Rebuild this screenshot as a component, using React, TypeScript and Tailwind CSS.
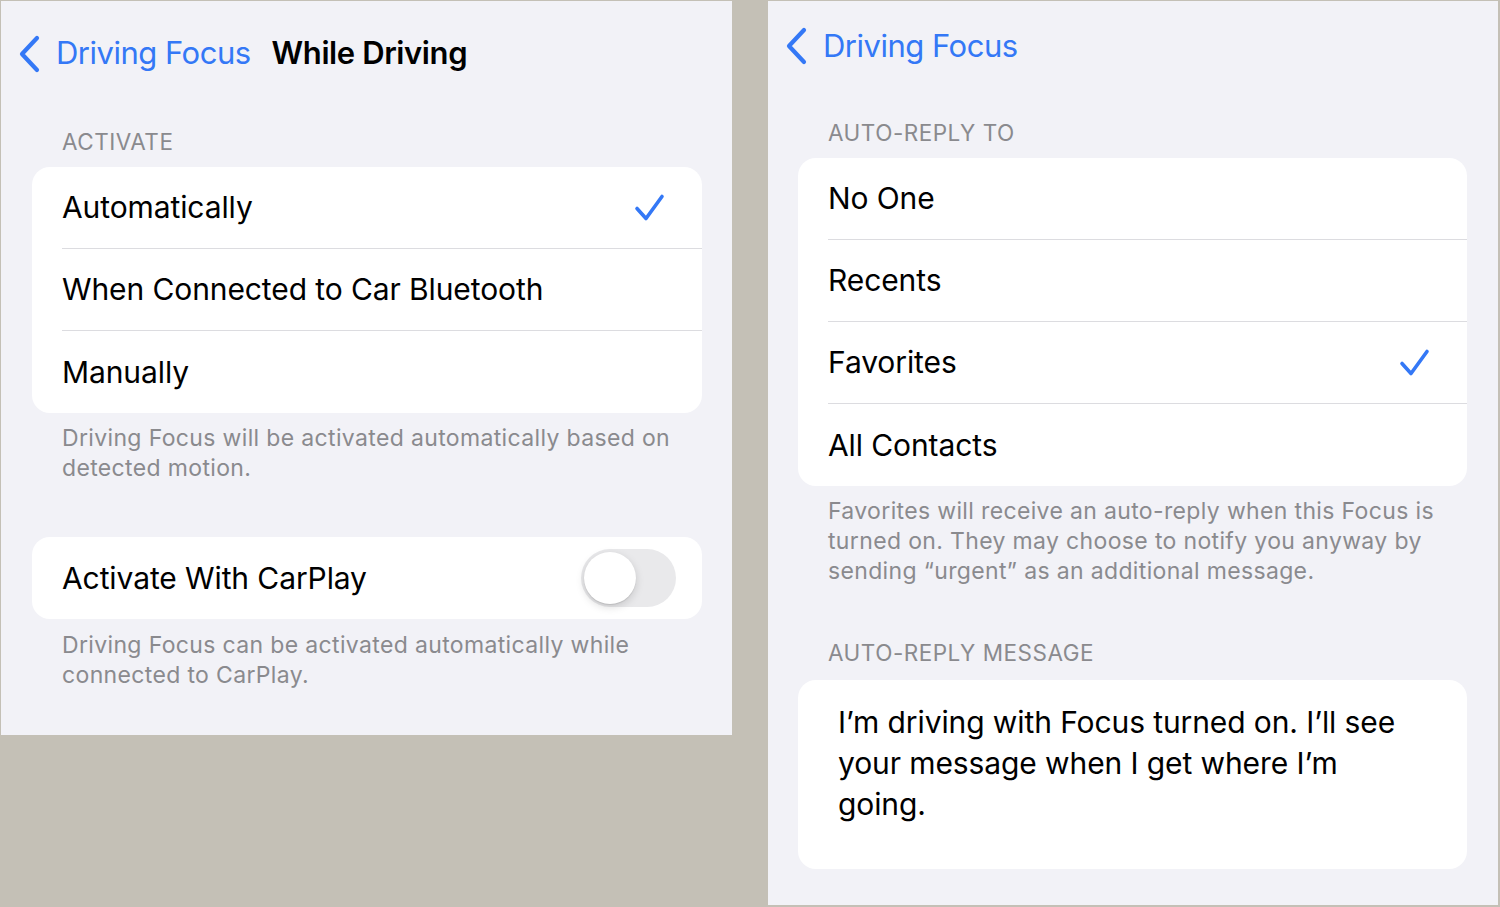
const BLUE = "#3478f6";

const Chevron = () => (
  <svg width="26" height="38" viewBox="0 0 26 38" fill="none">
    <path d="M20 3 L5 19 L20 35" stroke={BLUE} strokeWidth="4.2" strokeLinecap="round" strokeLinejoin="round" />
  </svg>
);

const Check = () => (
  <svg width="32" height="30" viewBox="0 0 32 30" fill="none">
    <path d="M3 15.5 L12 25.5 L28 3.5" stroke={BLUE} strokeWidth="3.6" strokeLinecap="round" strokeLinejoin="round" />
  </svg>
);

type RowProps = { label: string; checked?: boolean; last?: boolean };

const Row = ({ label, checked, last }: RowProps) => (
  <div className="pl-[30px] h-[82px] flex flex-col">
    <div className="flex-1 flex items-center justify-between pr-[36px]">
      <span className="text-[30px] text-black tracking-[-0.1px]">{label}</span>
      {checked && <Check />}
    </div>
    {!last && <div className="h-px bg-[#dcdce0]" />}
  </div>
);

const Label = ({ children }: { children: React.ReactNode }) => (
  <div className="pl-[30px] text-[22.5px] leading-[30px] tracking-[0.5px] text-[#8a8a8e] uppercase">{children}</div>
);

const Footer = ({ children }: { children: React.ReactNode }) => (
  <p className="pl-[30px] pr-[20px] text-[23px] leading-[30px] tracking-[0.35px] text-[#8a8a8e]">{children}</p>
);

export default function App() {
  return (
    <div
      className="w-[1500px] h-[907px] bg-[#c4c0b6] flex items-start pt-px overflow-hidden"
      style={{ fontFamily: "Inter, 'Noto Sans', sans-serif" }}
    >
      {/* Left panel */}
      <div className="ml-px w-[731px] h-[734px] bg-[#f2f2f7]">
        <div className="flex items-center h-[106px] pl-[16px] pb-[1px]">
          <Chevron />
          <span className="ml-[13px] text-[31px] text-[#3478f6] tracking-[-0.5px]">Driving Focus</span>
          <span className="ml-[21px] text-[31px] font-semibold text-black tracking-[-0.4px]">While Driving</span>
        </div>
        <div className="pl-[31px] pr-[30px]">
          <div className="mt-[20px]"><Label>Activate</Label></div>
          <div className="mt-[10px] bg-white rounded-[18px] overflow-hidden">
            <Row label="Automatically" checked />
            <Row label="When Connected to Car Bluetooth" />
            <Row label="Manually" last />
          </div>
          <div className="mt-[10px]">
            <Footer>Driving Focus will be activated automatically based on detected motion.</Footer>
          </div>
          <div className="mt-[54px] bg-white rounded-[18px] h-[82px] pl-[30px] pr-[26px] flex items-center justify-between">
            <span className="text-[30px] text-black tracking-[-0.1px]">Activate With CarPlay</span>
            <div className="w-[95px] h-[58px] rounded-full bg-[#e9e9eb] p-[3px] flex items-center">
              <div className="w-[52px] h-[52px] rounded-full bg-white shadow-[0_3px_8px_rgba(0,0,0,0.15),0_1px_1px_rgba(0,0,0,0.1)]" />
            </div>
          </div>
          <div className="mt-[11px]">
            <Footer>Driving Focus can be activated automatically while connected to CarPlay.</Footer>
          </div>
        </div>
      </div>

      {/* Right panel */}
      <div className="ml-[36px] w-[730px] h-[904px] bg-[#f2f2f7]">
        <div className="flex items-center h-[90px] pl-[16px]">
          <Chevron />
          <span className="ml-[13px] text-[31px] text-[#3478f6] tracking-[-0.5px]">Driving Focus</span>
        </div>
        <div className="pl-[30px] pr-[31px]">
          <div className="mt-[27px]"><Label>Auto-Reply To</Label></div>
          <div className="mt-[10px] bg-white rounded-[18px] overflow-hidden">
            <Row label="No One" />
            <Row label="Recents" />
            <Row label="Favorites" checked />
            <Row label="All Contacts" last />
          </div>
          <div className="mt-[10px]">
            <Footer>Favorites will receive an auto-reply when this Focus is turned on. They may choose to notify you anyway by sending “urgent” as an additional message.</Footer>
          </div>
          <div className="mt-[52px]"><Label>Auto-Reply Message</Label></div>
          <div className="mt-[12px] bg-white rounded-[18px] h-[189px] pl-[40px] pr-[60px] pt-[22px]">
            <p className="text-[30px] leading-[41px] text-black tracking-[-0.1px]">
              I’m driving with Focus turned on. I’ll see your message when I get where I’m going.
            </p>
          </div>
        </div>
      </div>
    </div>
  );
}
